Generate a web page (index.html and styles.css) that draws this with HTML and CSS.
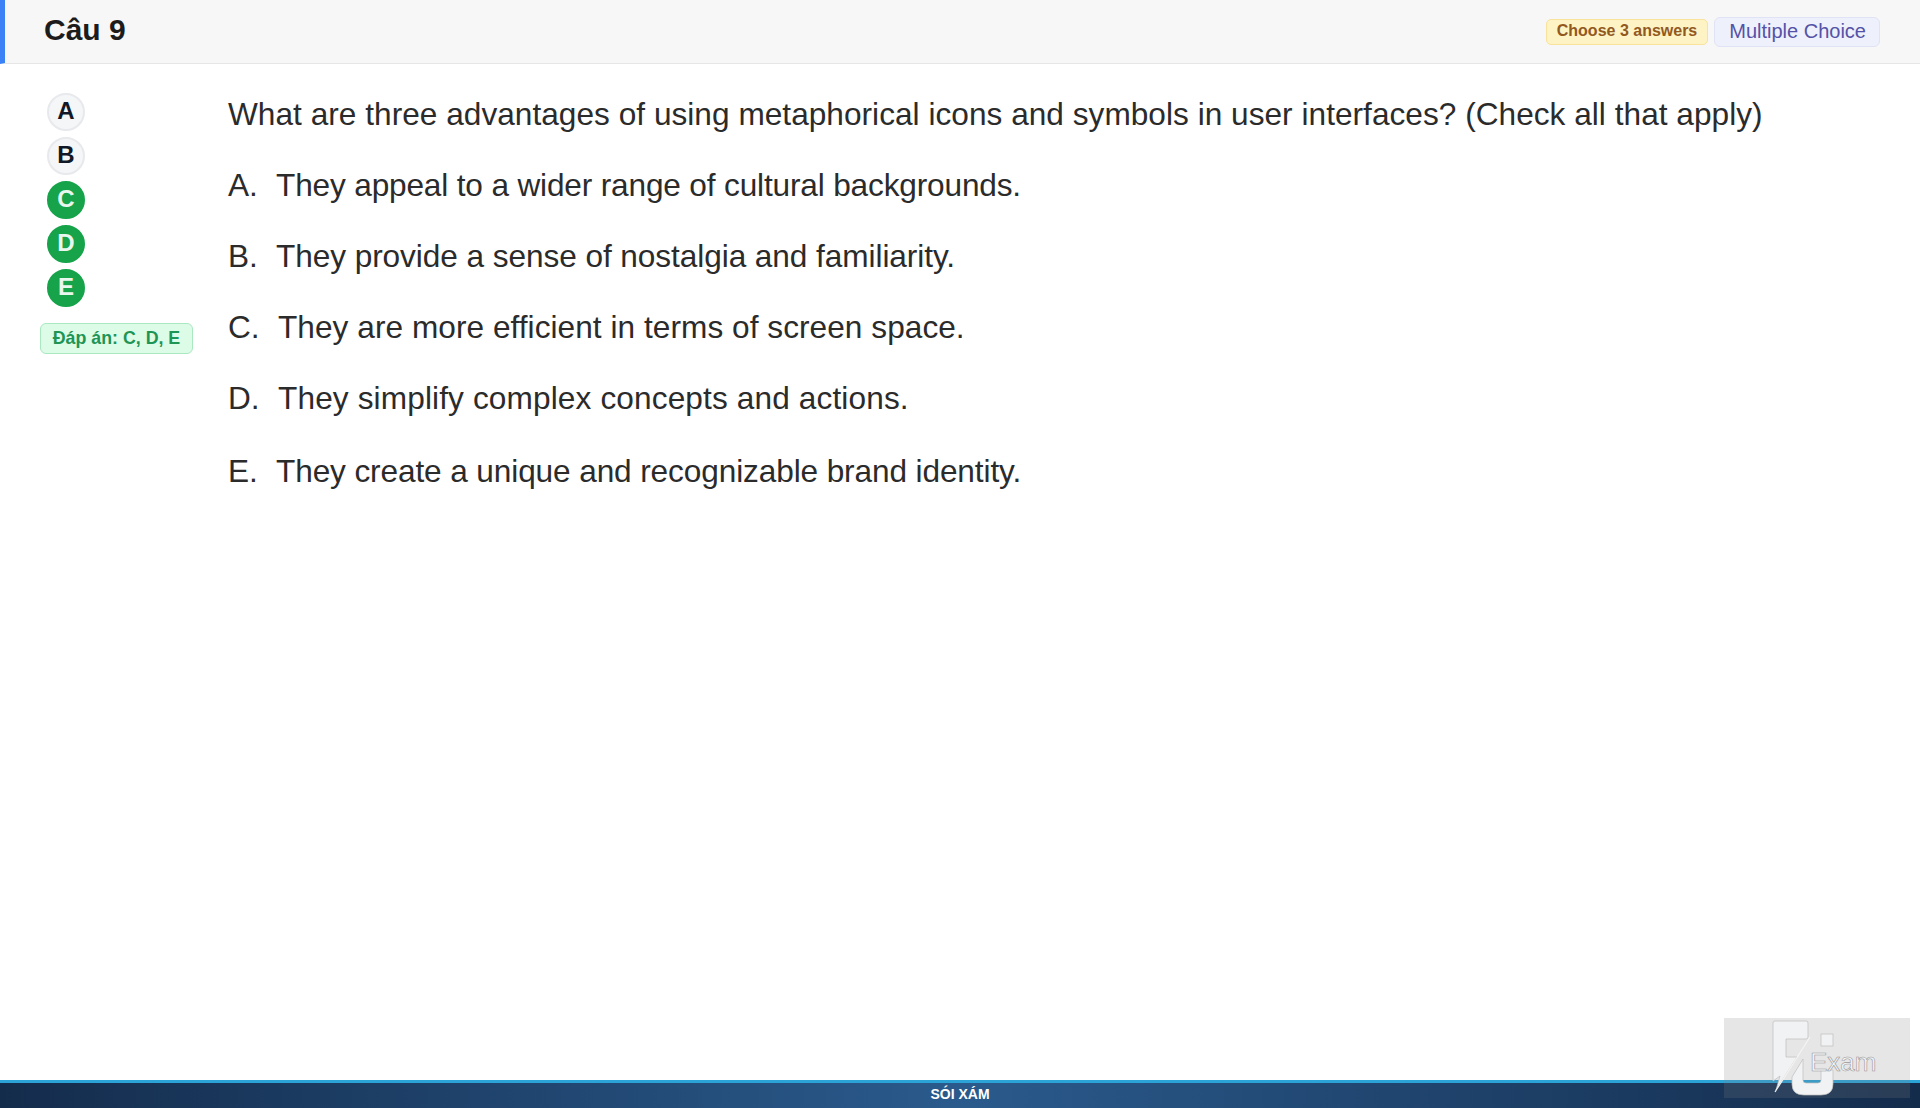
FILE: index.html
```html
<!DOCTYPE html>
<html lang="vi">
<head>
<meta charset="utf-8">
<title>Câu 9</title>
<link rel="stylesheet" href="styles.css">
</head>
<body>
<div class="page">
  <header class="head">
    <h1 class="title">Câu 9</h1>
    <div class="badges">
      <span class="badge-choose">Choose 3 answers</span>
      <span class="badge-type">Multiple Choice</span>
    </div>
  </header>
  <main class="main">
    <aside class="side">
      <div class="opts">
        <span class="opt">A</span>
        <span class="opt">B</span>
        <span class="opt ok">C</span>
        <span class="opt ok">D</span>
        <span class="opt ok">E</span>
      </div>
      <div class="answer">Đáp án: C, D, E</div>
    </aside>
    <section class="question">
      <p class="line line-q">What are three advantages of using metaphorical icons and symbols in user interfaces? (Check all that apply)</p>
      <p class="line line-a"><span class="key">A.</span>They appeal to a wider range of cultural backgrounds.</p>
      <p class="line line-b"><span class="key">B.</span>They provide a sense of nostalgia and familiarity.</p>
      <p class="line line-c"><span class="key key-wide">C.</span>They are more efficient in terms of screen space.</p>
      <p class="line line-d"><span class="key key-wide">D.</span>They simplify complex concepts and actions.</p>
      <p class="line line-e"><span class="key">E.</span>They create a unique and recognizable brand identity.</p>
    </section>
  </main>
  <footer class="foot">SÓI XÁM</footer>
  <div class="logo">
    <svg class="logo-svg" viewBox="0 0 186 80" width="186" height="80">
      <path class="lg-f" d="M51 3H82Q84 3 84 5V19Q84 21 82 21H62V39H73L52 72L56 58L49 63V5Q49 3 51 3Z"/>
      <path class="lg-u" d="M68 59L79 41V62Q79 65 82 65H94Q97 65 97 62V52H109V66Q109 77 97 77H80Q68 77 68 66Z"/>
      <rect class="lg-s" x="97" y="16" width="12" height="12"/>
      <line class="lg-l" x1="86" y1="19" x2="51" y2="74"/>
      <text class="lg-t" x="86" y="53">Exam</text>
    </svg>
  </div>
</div>
</body>
</html>
```
FILE: styles.css
```css
* { box-sizing: border-box; }
html, body { margin: 0; height: 100%; }
body { font-family: "Liberation Sans", Arial, sans-serif; background: #fff; color: #222; overflow: hidden; }
.page { position: relative; height: 1108px; display: flex; flex-direction: column; }
.head { height: 64px; flex: none; display: flex; align-items: center; justify-content: space-between; padding: 0 40px 3px 39px; background: #f7f7f7; border-left: 5px solid #3b82f6; border-bottom: 1px solid #e6e6e6; }
.title { margin: 0; font-size: 30px; font-weight: 700; color: #1c1c1c; line-height: 1; }
.badges { display: flex; align-items: center; gap: 6px; padding-top: 3px; }
.badge-choose { height: 26px; padding: 0 10px 2px; display: flex; align-items: center; font-size: 16px; font-weight: 700; color: #92591f; background: #fdf3c4; border: 1px solid #f8e29c; border-radius: 5px; }
.badge-type { height: 30px; padding: 0 13px 0 14px; display: flex; align-items: center; font-size: 20px; color: #5452a8; background: #eef0fb; border: 1px solid #dfe3f5; border-radius: 6px; }
.main { flex: 1; display: flex; padding: 29px 0 0 40px; gap: 35px; }
.side { width: 153px; flex: none; display: flex; flex-direction: column; }
.opts { display: flex; flex-direction: column; gap: 6px; padding-left: 7px; }
.opt { width: 38px; height: 38px; border-radius: 50%; display: flex; align-items: center; justify-content: center; font-size: 24px; font-weight: 700; color: #111827; background: #f5f6f8; border: 2px solid #e8e9ec; padding-bottom: 2px; }
.opt.ok { background: #16a34a; border-color: #16a34a; color: #e9f7ee; }
.answer { margin-top: 16px; height: 31px; display: flex; align-items: center; justify-content: center; font-size: 17.8px; font-weight: 700; color: #1e9455; background: #dcfce7; border: 1px solid #a9e8c0; border-radius: 6px; }
.question { flex: 1; padding-top: 3px; }
.line { margin: 0 0 35px; font-size: 31.6px; line-height: 36px; color: #2b2b2b; }
.line-q { letter-spacing: 0.03px; }
.line-a { letter-spacing: -0.16px; }
.line-b { letter-spacing: -0.07px; }
.line-c { letter-spacing: 0.05px; }
.line-d { letter-spacing: 0.13px; }
.line-e { margin-top: 37px; letter-spacing: -0.115px; }
.key { display: inline-block; width: 48px; letter-spacing: 0; }
.key-wide { width: 50px; }
.foot { height: 28px; flex: none; display: flex; align-items: center; justify-content: center; padding-bottom: 4px; font-size: 14px; font-weight: 700; color: #fff; background: linear-gradient(90deg, #142c4c 0%, #2a5a8c 50%, #142c4c 100%); border-top: 3px solid #2ba3d6; }
.logo { position: absolute; left: 1724px; top: 1018px; width: 186px; height: 80px; background: rgba(128, 128, 128, 0.2); }
.logo-svg { display: block; }
.lg-f, .lg-u, .lg-s { fill: #f1f2f3; stroke: #bdbdbd; stroke-width: 0.7; }
.lg-l { stroke: #f4f4f4; stroke-width: 1.2; }
.lg-t { font-family: "Liberation Sans", Arial, sans-serif; font-size: 26px; fill: #f3f4f5; stroke: #9a9a9a; stroke-width: 0.6; }
```
